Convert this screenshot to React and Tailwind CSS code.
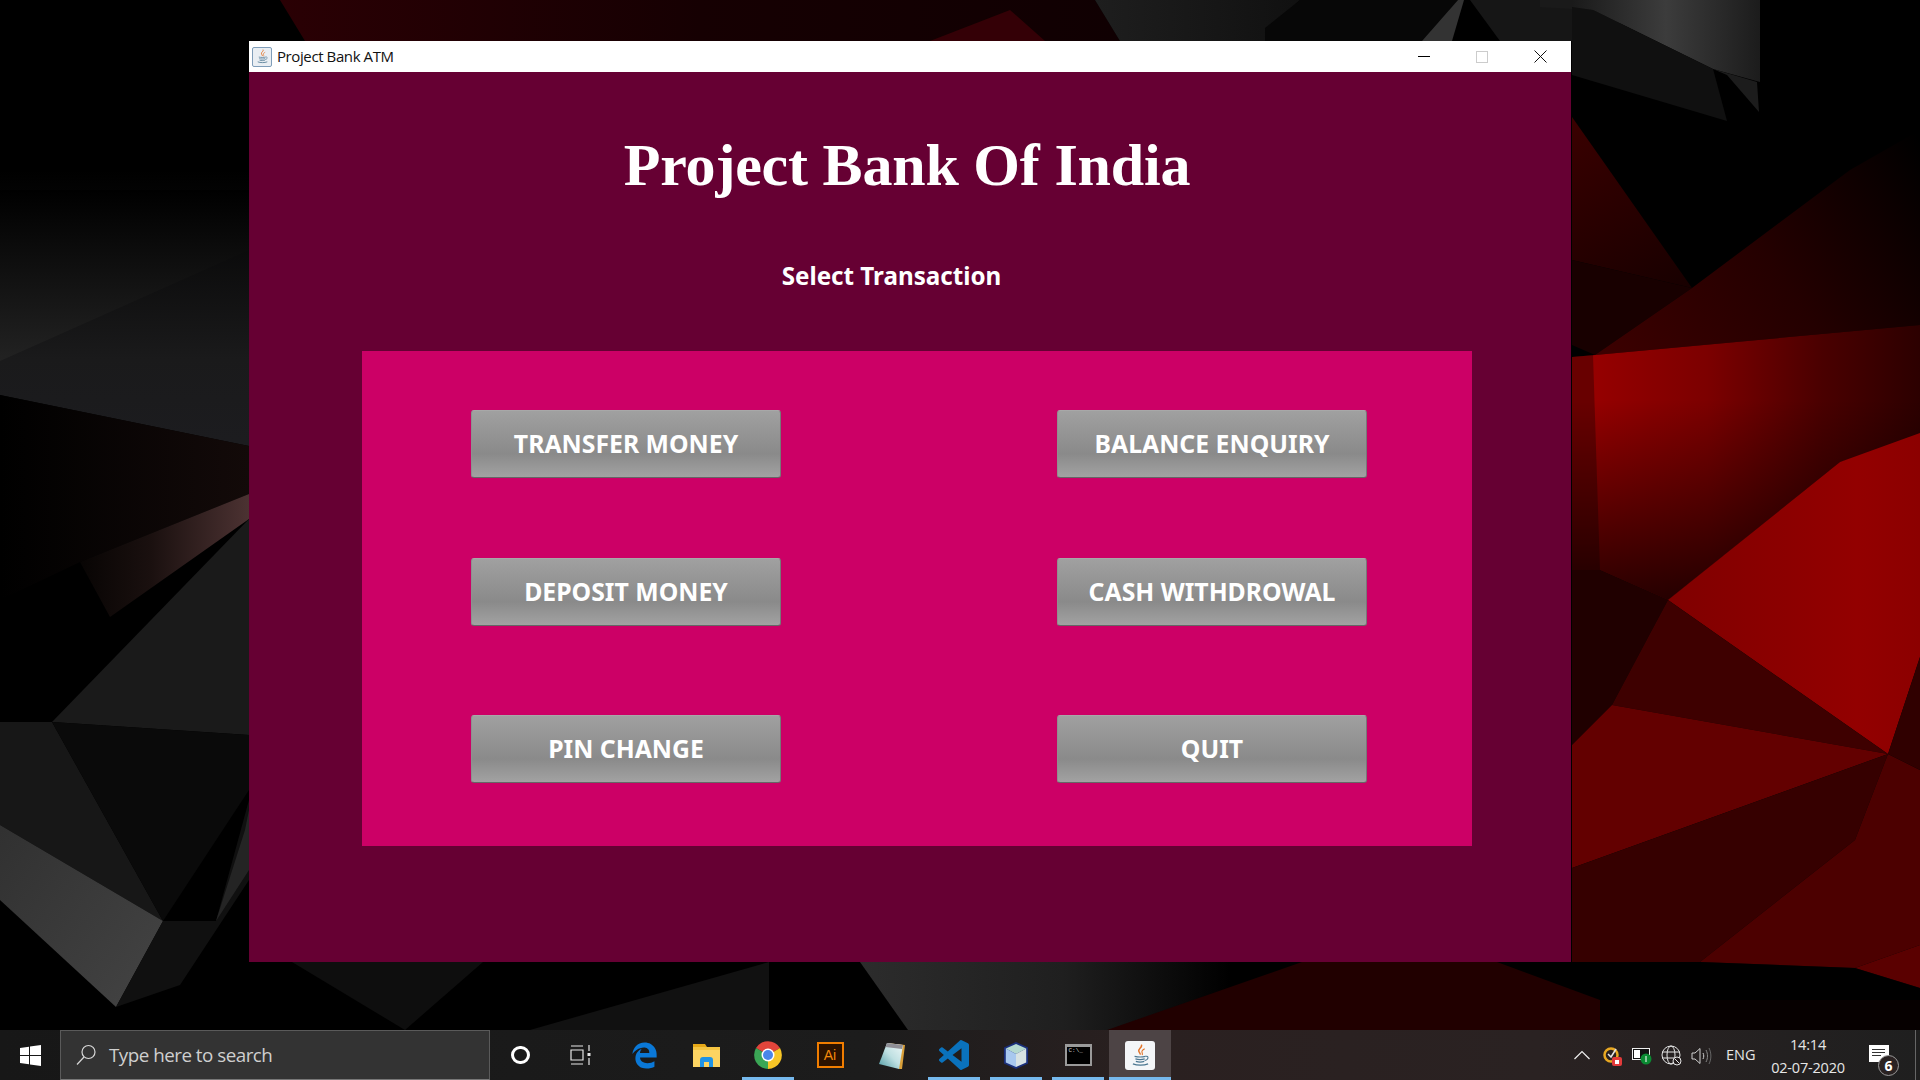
import React from "react";
import { FaEdgeLegacy } from "react-icons/fa6";

const P = ({ d, f, o }) => <polygon points={d} fill={f} opacity={o} />;

function Wallpaper() {
  return (
    <svg className="absolute inset-0" width="1920" height="1080" viewBox="0 0 1920 1080">
      <defs>
        <linearGradient id="g1" x1="0" y1="170" x2="0" y2="440" gradientUnits="userSpaceOnUse">
          <stop offset="0" stopColor="#000" /><stop offset="0.7" stopColor="#1a1a1b" /><stop offset="1" stopColor="#1c1c1f" />
        </linearGradient>
        <linearGradient id="g1b" x1="0" y1="190" x2="0" y2="361" gradientUnits="userSpaceOnUse">
          <stop offset="0" stopColor="#000" /><stop offset="1" stopColor="#222222" />
        </linearGradient>
        <linearGradient id="g2" x1="70" y1="0" x2="249" y2="0" gradientUnits="userSpaceOnUse">
          <stop offset="0" stopColor="#050302" /><stop offset="0.45" stopColor="#1a100f" /><stop offset="1" stopColor="#4c3232" />
        </linearGradient>
        <linearGradient id="g3" x1="0" y1="0" x2="249" y2="0" gradientUnits="userSpaceOnUse">
          <stop offset="0" stopColor="#000" /><stop offset="1" stopColor="#130a09" />
        </linearGradient>
        <linearGradient id="g4" x1="0" y1="830" x2="160" y2="950" gradientUnits="userSpaceOnUse">
          <stop offset="0" stopColor="#313131" /><stop offset="1" stopColor="#414141" />
        </linearGradient>
        <linearGradient id="g5" x1="1592" y1="0" x2="1920" y2="0" gradientUnits="userSpaceOnUse">
          <stop offset="0" stopColor="#960000" /><stop offset="0.35" stopColor="#7c0000" /><stop offset="0.7" stopColor="#4a0000" /><stop offset="1" stopColor="#2c0000" />
        </linearGradient>
        <linearGradient id="g5b" x1="0" y1="400" x2="0" y2="600" gradientUnits="userSpaceOnUse">
          <stop offset="0" stopColor="#000" stopOpacity="0" /><stop offset="1" stopColor="#000" stopOpacity="0.72" />
        </linearGradient>
        <linearGradient id="g6" x1="1600" y1="350" x2="1920" y2="140" gradientUnits="userSpaceOnUse">
          <stop offset="0" stopColor="#3c0000" /><stop offset="0.5" stopColor="#240000" /><stop offset="1" stopColor="#000" />
        </linearGradient>
        <linearGradient id="g7" x1="1572" y1="117" x2="1680" y2="290" gradientUnits="userSpaceOnUse">
          <stop offset="0" stopColor="#3a0000" /><stop offset="1" stopColor="#180000" />
        </linearGradient>
        <linearGradient id="g8" x1="1668" y1="600" x2="1920" y2="600" gradientUnits="userSpaceOnUse">
          <stop offset="0" stopColor="#800000" /><stop offset="0.75" stopColor="#930000" /><stop offset="1" stopColor="#8c0000" />
        </linearGradient>
        <linearGradient id="g9" x1="1572" y1="0" x2="1760" y2="0" gradientUnits="userSpaceOnUse">
          <stop offset="0" stopColor="#1a1a1a" /><stop offset="0.5" stopColor="#3c3c3c" /><stop offset="1" stopColor="#1c1c1c" />
        </linearGradient>
        <linearGradient id="g10" x1="280" y1="0" x2="1120" y2="0" gradientUnits="userSpaceOnUse">
          <stop offset="0" stopColor="#2a0004" /><stop offset="0.5" stopColor="#160002" /><stop offset="1" stopColor="#100002" />
        </linearGradient>
        <linearGradient id="g11" x1="860" y1="0" x2="1230" y2="0" gradientUnits="userSpaceOnUse">
          <stop offset="0" stopColor="#2c2c2c" /><stop offset="0.55" stopColor="#1f1f1f" /><stop offset="1" stopColor="#000" />
        </linearGradient>
        <linearGradient id="g13" x1="1095" y1="0" x2="1400" y2="0" gradientUnits="userSpaceOnUse">
          <stop offset="0" stopColor="#1e1e1e" /><stop offset="1" stopColor="#0a0a0a" />
        </linearGradient>
      </defs>
      <rect width="1920" height="1080" fill="#000" />
      {/* left */}
      <P d="0,170 249,170 249,446 0,395" f="url(#g1)" />
      <P d="0,190 249,190 249,250 0,361" f="url(#g1b)" />
      <P d="0,395 249,446 249,494 80,562 0,600" f="url(#g3)" />
      <P d="249,494 80,562 110,617 249,519" f="url(#g2)" />
      <P d="52,722 249,519 249,735" f="#1a1a1a" />
      <P d="0,722 52,722 163,921 0,825" f="#171717" />
      <P d="52,722 249,735 249,790 163,921" f="#0a0a0a" />
      <P d="0,825 163,921 116,1007 0,900" f="url(#g4)" />
      <P d="116,1007 163,921 216,921 249,800 249,880 180,985" f="#101010" />
      <P d="216,921 245,830 249,810 249,870" f="#242424" />
      {/* top */}
      <P d="280,0 1095,0 1120,41 305,41" f="url(#g10)" />
      <P d="1010,10 930,41 1045,41" f="#340006" />
      <P d="1095,0 1300,0 1270,28 1265,41 1120,41" f="url(#g13)" />
      <P d="1265,28 1300,0 1458,0 1422,41 1265,41" f="#070707" />
      <P d="1458,0 1464,0 1452,41 1422,41" f="#333" />
      <P d="1470,0 1540,0 1605,10 1640,41 1500,41" f="#161616" />
      {/* top-right grey */}
      <P d="1540,0 1760,0 1760,82 1713,69 1593,10 1540,7" f="url(#g9)" />
      <P d="1572,7 1593,10 1713,69 1727,121 1572,75" f="#101010" />
      <P d="1713,69 1757,82 1759,112 1727,75" f="#1c1c1c" />
      {/* reds */}
      <P d="1572,117 1692,288 1572,260" f="url(#g7)" />
      <P d="1572,260 1692,288 1595,355 1572,345" f="#180000" />
      <P d="1595,355 1692,288 1850,170 1920,130 1920,325" f="url(#g6)" />
      <P d="1572,357 1595,355 1920,325 1920,440 1840,462 1668,600 1600,570 1572,570" f="url(#g5)" />
      <P d="1572,400 1920,400 1920,440 1840,462 1668,600 1600,570 1572,570" f="url(#g5b)" />
      <P d="1572,357 1593,355 1600,570 1572,570" f="#000" o="0.3" />
      <P d="1572,570 1600,570 1668,600 1653,628 1612,705 1572,745" f="#200000" />
      <P d="1668,600 1840,462 1920,433 1920,657 1888,754" f="url(#g8)" />
      <P d="1612,705 1653,628 1668,600 1888,754" f="#3e0000" />
      <P d="1572,745 1612,705 1888,754 1572,868" f="#630000" />
      <P d="1572,868 1888,754 1855,840 1700,962 1572,962" f="#360000" />
      <P d="1888,754 1920,770 1920,945 1855,968 1700,962 1855,840" f="#4c0000" />
      <P d="1888,754 1920,657 1920,770" f="#300000" />
      <P d="1855,968 1920,945 1920,988" f="#5a0000" />
      <P d="1572,962 1700,962 1855,968 1920,988 1920,992 1700,975" f="#000" o="0.6" />
      {/* bottom */}
      <P d="292,962 483,962 405,1030" f="#0e0e0e" />
      <P d="530,1030 769,962 769,1030" f="#111" />
      <P d="860,962 1230,962 1230,1030 908,1030" f="url(#g11)" />
      <P d="1302,962 1497,962 1600,1000 1600,1030 1107,1030" f="#210000" />
      <P d="1600,1000 1920,1000 1920,1030 1600,1030" f="#060000" />
    </svg>
  );
}

function JavaGlyph({ size }) {
  return (
    <svg width={size} height={size} viewBox="0 0 32 32" fill="none">
      <path d="M17 3c2 3-4 5-3 8 .5 1.500 1.500 2 2 4" stroke="#e2742a" strokeWidth="1.700" />
      <path d="M21 8c-3 1.500-4 3-3 5 .5 1 .5 1.500 0 2.500" stroke="#e2742a" strokeWidth="1.300" />
      <path d="M9 17c4 1 9 1 13 0M10 20c3 1 8 1 11 0M10.500 23c3 1 7 1 10 0" stroke="#4b7690" strokeWidth="1.400" />
      <path d="M22 17c4-1 4 4-1 5" stroke="#4b7690" strokeWidth="1.200" />
      <path d="M7 26c5 2 13 2 18 0" stroke="#4b7690" strokeWidth="1.500" />
    </svg>
  );
}

function TitleBar() {
  return (
    <div className="h-[31px] bg-white flex items-center shrink-0 text-[#111]">
      <div className="ml-[3px] w-[20px] h-[20px] rounded-[2px] border border-[#7f9db9] bg-[#e9eef3] flex items-center justify-center">
        <JavaGlyph size={17} />
      </div>
      <span className="ml-[5px] text-[15px] font-['Open_Sans','Noto_Sans',sans-serif] tracking-[-0.4px]">Project Bank ATM</span>
      <div className="ml-auto flex h-full items-center">
        <div className="w-[58px] flex justify-center"><div className="w-[12px] h-px bg-black" /></div>
        <div className="w-[58px] flex justify-center"><div className="w-[12px] h-[12px] border border-[#ccc]" /></div>
        <div className="w-[58px] mr-[2px] flex justify-center">
          <svg width="13" height="13" viewBox="0 0 13 13" stroke="#111" strokeWidth="1"><path d="M.5.5l12 12M12.500.5l-12 12" /></svg>
        </div>
      </div>
    </div>
  );
}

function Btn({ children }) {
  return (
    <button className="w-[310px] h-[68px] rounded-[3px] border border-[#8f8f8f] border-t-[#a8a8a8] border-b-[#666] border-r-[#777] bg-[linear-gradient(180deg,#a0a0a0_0%,#8a8a8a_65%,#a2a2a2_100%)] text-white font-bold text-[24.800px] font-['Noto_Sans',sans-serif] flex items-center justify-center">
      {children}
    </button>
  );
}

function AppWindow() {
  return (
    <div className="absolute left-[249px] top-[41px] w-[1322px] h-[921px] bg-[#660033] flex flex-col">
      <TitleBar />
      <h1 className="mt-[58px] text-center pr-[6px] text-white font-bold text-[60px] leading-[70px] tracking-[-0.2px] font-['Liberation_Serif',serif]">Project Bank Of India</h1>
      <p className="mt-[59px] text-center pr-[37px] text-white font-bold text-[24.200px] leading-[34px] font-['Noto_Sans',sans-serif]">Select Transaction</p>
      <div className="mt-[58px] ml-[113px] w-[1110px] h-[495px] bg-[#cc0066] pt-[59px] pl-[109px]">
        <div className="grid grid-cols-[310px_310px] gap-x-[276px]">
          <Btn>TRANSFER MONEY</Btn>
          <Btn>BALANCE ENQUIRY</Btn>
        </div>
        <div className="grid grid-cols-[310px_310px] gap-x-[276px] mt-[80px]">
          <Btn>DEPOSIT MONEY</Btn>
          <Btn>CASH WITHDROWAL</Btn>
        </div>
        <div className="grid grid-cols-[310px_310px] gap-x-[276px] mt-[89px]">
          <Btn>PIN CHANGE</Btn>
          <Btn>QUIT</Btn>
        </div>
      </div>
    </div>
  );
}

function Slot({ children, active, open, w = "w-[62px]" }) {
  return (
    <div className={`${w} h-full relative flex items-center justify-center ${active ? "bg-[#4d4445]" : ""}`}>
      {children}
      {(open || active) && <div className={`absolute bottom-0 h-[3px] bg-[#76b9ed] ${active ? "inset-x-0" : "left-[5px] right-[5px]"}`} />}
    </div>
  );
}

function Taskbar() {
  return (
    <div className="relative h-[50px] shrink-0 flex items-stretch bg-[linear-gradient(90deg,#171717_0%,#1c1c1c_45%,#2a2020_60%,#2a2222_80%,#1f1f1f_100%)]">
      <div className="w-[60px] flex items-center justify-center">
        <svg width="21" height="21" viewBox="0 0 21 21" fill="#fff">
          <path d="M0 3l9-1.300V10H0zM10 1.500L21 0v10H10zM0 11h9v8.300L0 18zM10 11h11v10l-11-1.500z" />
        </svg>
      </div>
      <div className="w-[430px] bg-[#333333] border border-[#5a5a5a] border-b-[#777] flex items-center">
        <svg className="ml-[14px]" width="22" height="22" viewBox="0 0 22 22" fill="none" stroke="#d8d8d8" strokeWidth="1.200">
          <circle cx="13.500" cy="8" r="6.500" /><path d="M9 13L2 20.500" />
        </svg>
        <span className="ml-[12px] text-[18.800px] text-[#cfcfcf] font-['Open_Sans',sans-serif] tracking-[-0.5px]">Type here to search</span>
      </div>
      <Slot w="w-[61px]">
        <div className="w-[19px] h-[18px] rounded-full border-[3px] border-white" />
      </Slot>
      <Slot w="w-[59px]">
        <svg width="21" height="20" viewBox="0 0 21 20" fill="none" stroke="#e8e8e8" strokeWidth="1.200">
          <path d="M1 1h12M1 19h12M1 5h12v10H1zM19 0v6M19 13v7" /><rect x="17.500" y="8" width="3" height="3" fill="#e8e8e8" stroke="none" />
        </svg>
      </Slot>
      <div className="w-[3px]" />
      <Slot><FaEdgeLegacy size={27} color="#0a78d7" /></Slot>
      <Slot>
        <svg width="27" height="23" viewBox="0 0 27 23">
          <path d="M0 0h12l2 3h-14z" fill="#e6a817" />
          <rect y="3" width="27" height="20" fill="#fcd462" />
          <path d="M0 3h27v3H0z" fill="#f5c542" />
          <path d="M7 23v-7a3 3 0 013-3h7a3 3 0 013 3v7h-4v-5h-5v5z" fill="#1f93e6" />
        </svg>
      </Slot>
      <Slot open>
        <svg width="28" height="28" viewBox="0 0 28 28">
          <path d="M14 14L2 7A14 14 0 0126 7z" fill="#e2453b" />
          <path d="M14 14L26 7A14 14 0 0114 28z" fill="#f7c626" />
          <path d="M14 14L14 28A14 14 0 012 7z" fill="#3aa655" />
          <circle cx="14" cy="14" r="6.500" fill="#fff" />
          <circle cx="14" cy="14" r="5" fill="#4a86e8" />
        </svg>
      </Slot>
      <Slot>
        <div className="w-[27px] h-[26px] bg-[#2b1200] border-2 border-[#f07d00] flex items-center justify-center">
          <span className="text-[#f58a0b] text-[14px] font-['Liberation_Sans',sans-serif]">Ai</span>
        </div>
      </Slot>
      <Slot>
        <svg width="27" height="27" viewBox="0 0 27 27">
          <defs><linearGradient id="nt" x1="0" y1="1" x2="1" y2="0"><stop offset="0" stopColor="#4e9aa3" /><stop offset="0.5" stopColor="#bfe0e2" /><stop offset="1" stopColor="#f0f8f8" /></linearGradient></defs>
          <path d="M8 1l18 2-3 24h-3z" fill="#d9a03a" />
          <path d="M8 1l16 2-4 24L0 22z" fill="url(#nt)" />
          <path d="M8 1l16 2-1 4L6.500 5z" fill="#8f8f96" />
        </svg>
      </Slot>
      <Slot open>
        <svg width="30" height="30" viewBox="0 0 24 24" fill="#0a72bd">
          <path d="M23.150 2.587L18.210.21a1.494 1.494 0 0 0-1.705.29l-9.460 8.630-4.120-3.128a.999.999 0 0 0-1.276.057L.327 7.261A1 1 0 0 0 .326 8.740L3.899 12 .326 15.260a1 1 0 0 0 .001 1.479L1.650 17.940a.999.999 0 0 0 1.276.057l4.120-3.128 9.460 8.630a1.492 1.492 0 0 0 1.704.290l4.942-2.377A1.500 1.500 0 0 0 24 20.060V3.939a1.500 1.500 0 0 0-.850-1.352zm-5.146 14.861L10.826 12l7.178-5.448v10.896z" />
        </svg>
      </Slot>
      <Slot open>
        <svg width="26" height="27" viewBox="0 0 28 29">
          <path d="M14 0l13 6v17l-13 6-13-6V6z" fill="#1a2f7a" />
          <path d="M14 2l11 5-11 6-11-6z" fill="#b4d9d0" />
          <path d="M3 7l11 6v14L3 22z" fill="#a8c8ee" />
          <path d="M25 7l-11 6v14l11-5z" fill="#d7e2e2" />
        </svg>
      </Slot>
      <Slot open>
        <div className="w-[27px] h-[22px] bg-black border-2 border-[#9a9a9a] border-t-[3px]">
          <div className="text-[6px] leading-[8px] pl-[2px] text-[#cfcfcf] font-['Liberation_Mono',monospace]">C:\_</div>
        </div>
      </Slot>
      <Slot active>
        <div className="w-[30px] h-[29px] rounded-[3px] bg-[#f4f6f8] flex items-center justify-center">
          <JavaGlyph size={27} />
        </div>
      </Slot>
      <div className="flex-1 relative text-[#e6e6e6] font-['Open_Sans',sans-serif]">
        <div className="absolute inset-y-0 left-[396px] w-[30px] flex items-center justify-center">
          <svg width="16" height="10" viewBox="0 0 16 10" fill="none" stroke="#eee" strokeWidth="1.200"><path d="M.5 9L8 1.500 15.500 9" /></svg>
        </div>
        <div className="absolute left-[432px] top-[15px]">
          <svg width="20" height="22" viewBox="0 0 20 22">
            <circle cx="8" cy="10" r="6.500" fill="none" stroke="#e8a822" strokeWidth="2.500" />
            <path d="M5 9l3 3 5-8" stroke="#e6e6e6" strokeWidth="1.500" fill="none" />
            <rect x="9" y="12" width="10" height="9" rx="2" fill="#e23a3a" />
            <rect x="12" y="15" width="4" height="4" fill="#fff" />
          </svg>
        </div>
        <div className="absolute left-[461px] top-[17px]">
          <svg width="20" height="18" viewBox="0 0 20 18">
            <rect x=".5" y="1.500" width="17" height="11" fill="#111" stroke="#eee" />
            <rect x="2" y="3" width="6" height="8" fill="#fff" />
            <circle cx="14" cy="12" r="5.500" fill="#0a8a32" />
            <path d="M14 9v6" stroke="#fff" />
          </svg>
        </div>
        <div className="absolute left-[490px] top-[14px]">
          <svg width="22" height="24" viewBox="0 0 22 24" fill="none" stroke="#e6e6e6" strokeWidth="1">
            <circle cx="10" cy="11" r="9" /><ellipse cx="10" cy="11" rx="4" ry="9" /><path d="M1 8h18M1 14h18" />
            <circle cx="16" cy="17" r="4" fill="#241d1d" /><path d="M13.500 14.500l5 5" />
          </svg>
        </div>
        <div className="absolute left-[520px] top-[16px]">
          <svg width="22" height="20" viewBox="0 0 22 20" fill="none" stroke="#d0d0d0" strokeWidth="1">
            <path d="M1 7h3l5-4.500v15L4 13H1z" /><path d="M12 7c1 2 1 4 0 6" /><path d="M15 4c2 4 2 8 0 12" stroke="#888" /><path d="M18 2c2.500 5 2.500 11 0 16" stroke="#666" />
          </svg>
        </div>
        <span className="absolute left-[555px] top-[15px] text-[14.500px] leading-[20px]">ENG</span>
        <div className="absolute left-[592px] top-0 w-[90px] text-center text-[14.500px] leading-[23px] pt-[3px] tracking-[-0.2px]">
          <div>14:14</div>
          <div>02-07-2020</div>
        </div>
        <div className="absolute left-[698px] top-[15px] w-[20px] h-[17px] bg-white flex flex-col gap-[2px] pt-[4px] pl-[3px]">
          <div className="w-[13px] h-px bg-[#333]" /><div className="w-[13px] h-px bg-[#333]" /><div className="w-[9px] h-px bg-[#333]" />
        </div>
        <div className="absolute left-[707px] top-[25px] w-[21px] h-[21px] rounded-full border border-[#999] bg-[#2a2222] flex items-center justify-center text-[14px] font-bold text-white">6</div>
        <div className="absolute inset-y-0 left-[744px] w-px bg-[#666]" />
      </div>
    </div>
  );
}

export default function App() {
  return (
    <div className="w-[1920px] h-[1080px] overflow-hidden relative flex flex-col bg-black">
      <div className="relative flex-1">
        <Wallpaper />
        <AppWindow />
      </div>
      <Taskbar />
    </div>
  );
}
